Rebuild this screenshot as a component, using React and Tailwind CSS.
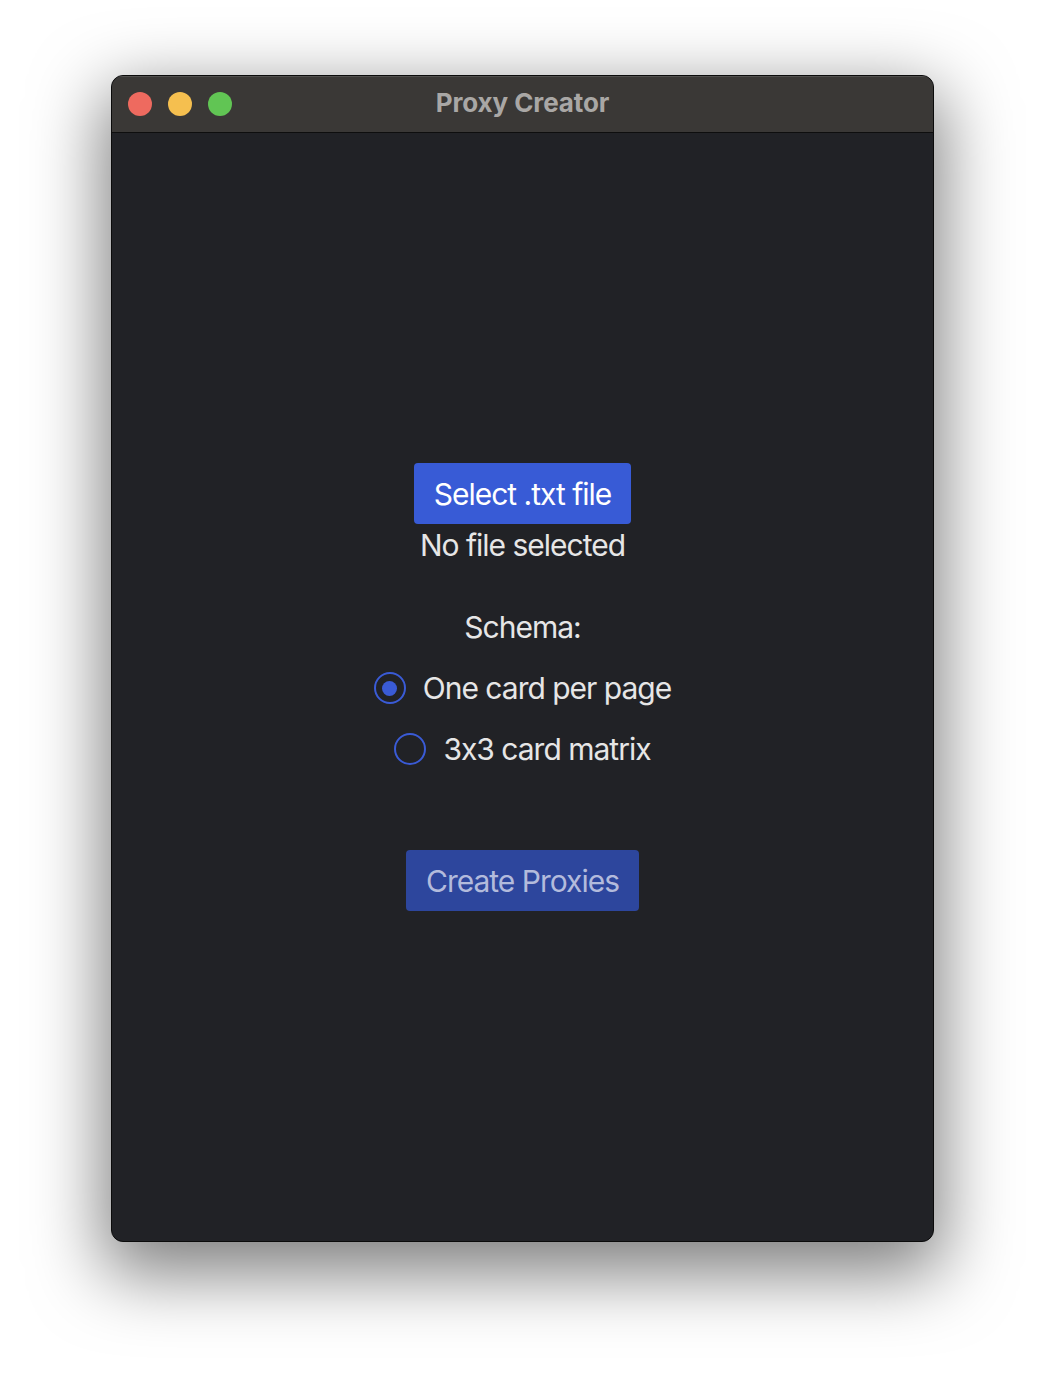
export default function App() {
    const options = [
        { id: 'single', label: 'One card per page', checked: true },
        { id: 'matrix', label: '3x3 card matrix', checked: false },
    ];

    return (
        <div className="min-h-[1390px] w-[1046px] bg-white pt-[75px] pl-[111px] font-['Inter','Liberation_Sans',sans-serif] [font-feature-settings:'calt'_0]">
            <div className="w-[823px] h-[1167px] rounded-[12px] border border-[#0b0b0b] bg-[#212226] shadow-[0_24px_70px_8px_rgba(0,0,0,0.5)] overflow-hidden flex flex-col">
                {/* Title bar */}
                <div className="relative h-[57px] shrink-0 bg-[#3a3836] border-b border-[#0e0e0e] shadow-[inset_0_1px_0_rgba(255,255,255,0.12)] flex items-center justify-center pb-[3px]">
                    <div className="absolute left-[16px] top-[16px] flex gap-[16px]">
                        <span className="w-[24px] h-[24px] rounded-full bg-[#ee6a5f]"></span>
                        <span className="w-[24px] h-[24px] rounded-full bg-[#f5bf4f]"></span>
                        <span className="w-[24px] h-[24px] rounded-full bg-[#61c554]"></span>
                    </div>
                    <span className="text-[26px] font-bold text-[#a9a7a5] tracking-[-0.1px]">Proxy Creator</span>
                </div>

                {/* Content */}
                <div className="flex-1 flex flex-col items-center justify-center text-[#e6e6e6] text-[30px] leading-[36px] tracking-[-1px]">
                    <button className="h-[61px] px-5 rounded-[4px] bg-[#385bd6] text-white">
                        Select .txt file
                    </button>
                    <div className="mt-[3px]">No file selected</div>

                    <div className="mt-[46px]">Schema:</div>

                    <div className="mt-[25px] flex flex-col items-center gap-[25px]">
                        {options.map(opt => (
                            <label key={opt.id} className="flex items-center gap-[17px] cursor-pointer">
                                <span className="w-[32px] h-[32px] rounded-full border-2 border-[#3a5bd6] flex items-center justify-center">
                                    {opt.checked && <span className="w-[15px] h-[15px] rounded-full bg-[#3a5bd6]"></span>}
                                </span>
                                <span>{opt.label}</span>
                            </label>
                        ))}
                    </div>

                    <button className="mt-[83px] h-[61px] px-5 rounded-[4px] bg-[#2d469d] text-[#b3bbdc]">
                        Create Proxies
                    </button>
                </div>
            </div>
        </div>
    );
}
